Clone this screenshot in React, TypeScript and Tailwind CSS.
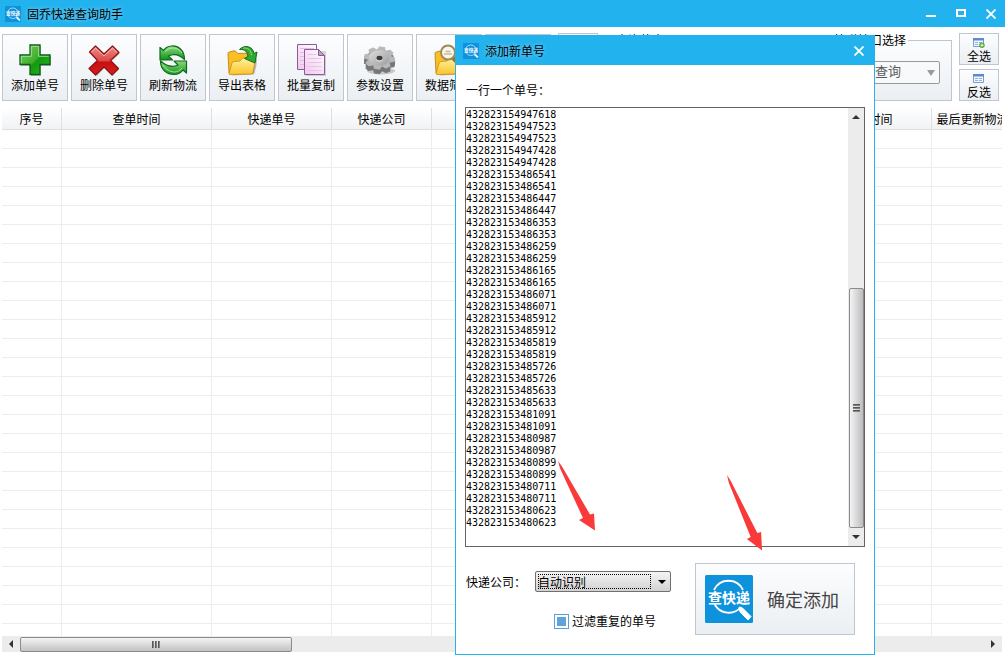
import type { ReactNode } from "react"
import clsx from "clsx"

const TRACKING_NUMBERS = [
  "432823154947618",
  "432823154947523",
  "432823154947523",
  "432823154947428",
  "432823154947428",
  "432823153486541",
  "432823153486541",
  "432823153486447",
  "432823153486447",
  "432823153486353",
  "432823153486353",
  "432823153486259",
  "432823153486259",
  "432823153486165",
  "432823153486165",
  "432823153486071",
  "432823153486071",
  "432823153485912",
  "432823153485912",
  "432823153485819",
  "432823153485819",
  "432823153485726",
  "432823153485726",
  "432823153485633",
  "432823153485633",
  "432823153481091",
  "432823153481091",
  "432823153480987",
  "432823153480987",
  "432823153480899",
  "432823153480899",
  "432823153480711",
  "432823153480711",
  "432823153480623",
  "432823153480623",
]

const COLUMNS = [
  { label: "序号", width: "w-[60px]" },
  { label: "查单时间", width: "w-[150px]" },
  { label: "快递单号", width: "w-[120px]" },
  { label: "快递公司", width: "w-[100px]" },
  { label: "物流状态", width: "w-[120px]" },
  { label: "最新物流", width: "w-[254px]" },
  { label: "发出时间", width: "w-[126px]" },
  { label: "最后更新物流时间", width: "w-[106px]" },
]

const ROW_COUNT = 40

const panel =
  "border border-[#c0c6d0] bg-linear-to-b from-[#fcfdfe] to-[#ebeff3]"

const Logo = ({ className }: { className: string }) => (
  <svg viewBox="0 0 48 48" className={className} aria-hidden="true">
    <rect width="48" height="48" rx="1.5" fill="#0f92dc" />
    <path
      d="M9 15a16 16 0 0 1 29 0M9.500 29a16 16 0 0 0 26.500 3"
      fill="none"
      stroke="#fff"
      strokeWidth="1.800"
    />
    <path
      d="M34 32l3.500 1 8.500 8.500-3 3.500-8-8z"
      fill="#fff"
      stroke="#fff"
      strokeLinejoin="round"
    />
    <text
      x="24"
      y="27.500"
      textAnchor="middle"
      fontSize="14"
      fontWeight="700"
      fill="#fff"
    >
      查快递
    </text>
  </svg>
)

const AddIcon = () => (
  <svg viewBox="0 0 32 32" className="size-8">
    <defs>
      <linearGradient id="add" x1="0" y1="0" x2="1" y2="1">
        <stop offset="0" stopColor="#7fd06a" />
        <stop offset=".5" stopColor="#3fae2c" />
        <stop offset=".55" stopColor="#129a10" />
        <stop offset="1" stopColor="#2fb61f" />
      </linearGradient>
    </defs>
    <path d="M12 2h10v10h10v10H22v10H12V22H2V12h10z" fill="#000" opacity=".25" />
    <path
      d="M11 1h10v10h10v9.500H21v10H11v-10H1V11h10z"
      fill="url(#add)"
      stroke="#0b5c14"
      strokeWidth="1.300"
    />
    <path
      d="M12.300 2.300h7.400v10h10M2.300 19.200V12.300h10v-10"
      fill="none"
      stroke="#a9e29b"
      strokeWidth=".9"
    />
  </svg>
)

const DeleteIcon = () => (
  <svg viewBox="0 0 32 32" className="size-8">
    <defs>
      <linearGradient id="del" x1="0" y1="0" x2="0" y2="1">
        <stop offset="0" stopColor="#ef8b87" />
        <stop offset=".5" stopColor="#dc4a49" />
        <stop offset=".56" stopColor="#c9100f" />
        <stop offset="1" stopColor="#d6201d" />
      </linearGradient>
    </defs>
    <path
      d="M8.500 3L17 11l8.500-8 6 7-8.500 7.500 8 8-6.500 6.500L17 23.500 9 32l-6.500-7 8-7.500L2.500 9z"
      fill="#000"
      opacity=".25"
    />
    <path
      d="M7.500 2L16 10l8.500-8L31 8.500l-8.500 8 8 8L24 31l-8-8-8.500 8L1 24.500l8.500-8L1.500 8z"
      fill="url(#del)"
      stroke="#8d1214"
      strokeWidth="1.200"
      strokeLinejoin="round"
    />
    <path
      d="M3.500 8l4-4L16 12l8.500-8 4.500 4.500"
      fill="none"
      stroke="#f9c3c0"
      strokeWidth=".9"
    />
  </svg>
)

const RefreshIcon = () => (
  <svg viewBox="0 0 32 32" className="size-8">
    <defs>
      <linearGradient id="ref" x1="0" y1="0" x2="0" y2="1">
        <stop offset="0" stopColor="#8fd882" />
        <stop offset=".5" stopColor="#4cb84a" />
        <stop offset="1" stopColor="#12901c" />
      </linearGradient>
    </defs>
    <g
      fill="url(#ref)"
      stroke="#0d6b1b"
      strokeWidth="1.200"
      strokeLinejoin="round"
    >
      <path d="M3 3.500v12.500h12.500l-4-4c5-2.500 11-1.500 16 3.500C27.500 6 21 1.500 14.500 2 11 2.200 8.500 3.500 6.500 6.500z" />
      <path d="M29.500 29V17H17l4 4c-5 2.500-11 1.500-17.500-4C3.500 26 10 30.500 17 30.500c4 0 7-1.500 9-4.500z" />
    </g>
    <path
      d="M8 7.800C13 2 21 3 25 9M6 21c4 7 14 10 19 3"
      fill="none"
      stroke="#b9ecb0"
      strokeWidth=".9"
    />
  </svg>
)

const FolderShape = () => (
  <>
    <path d="M6 31.500l22-1q3-8 3-15l-2-2-3 4z" fill="#000" opacity=".25" />
    <path
      d="M3 29L2 9.500Q2 8 3.500 8L7 7q2-.5 3 .5l2 2L26 9q2 0 2 2l-1 18z"
      fill="#fbbf26"
      stroke="#b8760c"
      strokeWidth=".8"
    />
    <path
      d="M3 29.500l3-10.500q.5-1.500 2-1.500l6-.5 3-3 11-.5q2 0 1.500 2L27 28.500q-.5 1.500-2 1.500L4 30.500q-1 0-1-1z"
      fill="url(#folder)"
      stroke="#c98a0e"
      strokeWidth=".8"
    />
  </>
)

const FolderGradient = () => (
  <defs>
    <linearGradient id="folder" x1="0" y1="0" x2="0" y2="1">
      <stop offset="0" stopColor="#fff3a0" />
      <stop offset="1" stopColor="#fcc42c" />
    </linearGradient>
  </defs>
)

const ExportIcon = () => (
  <svg viewBox="0 0 32 32" className="size-8">
    <FolderGradient />
    <FolderShape />
    <path
      d="M13.500 5.500C19 0 27 2.500 28 9.500l3-1.500-2 11-10.500-4.500 3.500-2C21.500 8 19 5 13.500 5.500z"
      fill="#2fa833"
      stroke="#14691c"
      strokeLinejoin="round"
    />
    <path d="M17 4.200c5-1 8 2 8.500 7" fill="none" stroke="#93dc85" />
  </svg>
)

const CopyIcon = () => (
  <svg viewBox="0 0 32 32" className="size-8">
    <defs>
      <linearGradient id="page" x1="1" y1="0" x2="0" y2="1">
        <stop offset="0" stopColor="#fff" />
        <stop offset="1" stopColor="#f0c8ee" />
      </linearGradient>
    </defs>
    <path d="M11 7h20v25H11z" fill="#000" opacity=".15" />
    <g stroke="#8d5a96">
      <path d="M2.500.500h19v25h-19z" fill="url(#page)" />
      <path
        d="M5 4.500h14M5 8.500h4M5 12.500h4M5 16.500h4M5 20.500h4"
        stroke="#e3b8e2"
      />
      <path d="M9.500 5.500h14l6 6v19h-20z" fill="url(#page)" />
      <path d="M23.500 5.500v6h6z" fill="#c79bd2" />
      <path
        d="M12.500 10.500h9M12.500 14.500h14M12.500 18.500h14M12.500 22.500h14M12.500 26.500h14"
        stroke="#e6c3e8"
      />
    </g>
  </svg>
)

const GEAR_TEETH = [0, 45, 90, 135, 180, 225, 270, 315]

const GearShape = () => (
  <>
    {GEAR_TEETH.map((angle) => (
      <path
        key={angle}
        d="M-2.500-15h5l2 6h-9z"
        strokeWidth="1"
        strokeLinejoin="round"
        transform={`rotate(${angle + 10})`}
      />
    ))}
    <circle r="10.500" stroke="none" />
  </>
)

const SettingsIcon = () => (
  <svg viewBox="0 0 32 32" className="size-8">
    <defs>
      <linearGradient id="gear" x1="0" y1="0" x2="1" y2="1">
        <stop offset="0" stopColor="#dedede" />
        <stop offset="1" stopColor="#9c9c9c" />
      </linearGradient>
    </defs>
    <ellipse cx="17" cy="27" rx="14" ry="3.500" fill="#000" opacity=".18" />
    <g fill="#777" stroke="#777">
      <g transform="translate(15.500 19.500) scale(1 .68)">
        <GearShape />
      </g>
      <g transform="translate(15.500 17) scale(1 .72)">
        <GearShape />
      </g>
    </g>
    <g
      fill="#b9b9b9"
      stroke="#b9b9b9"
      transform="translate(15.500 14) scale(1 .74)"
    >
      <GearShape />
    </g>
    <ellipse cx="15.500" cy="14" rx="10.500" ry="7.800" fill="url(#gear)" />
    <ellipse cx="15.500" cy="14" rx="3" ry="2.200" fill="#3c3c3c" />
    <path d="M12 15.500q3.500 3.500 7 0" fill="none" stroke="#e4e4e4" />
  </svg>
)

const FilterIcon = () => (
  <svg viewBox="0 0 32 32" className="size-8">
    <FolderGradient />
    <FolderShape />
    <path
      d="M20 14l9 9"
      stroke="#98702c"
      strokeWidth="4"
      strokeLinecap="round"
    />
    <circle
      cx="15"
      cy="8.500"
      r="7"
      fill="#f6f5ee"
      stroke="#a08a58"
      strokeWidth="2"
    />
    <path d="M11 10h8M12.500 7.500h5" stroke="#d0b98a" strokeWidth="1.500" />
  </svg>
)

const ListIcon = ({ plus }: { plus?: boolean }) => (
  <svg viewBox="0 0 12 10" className="h-[10px] w-3">
    <path d="M.5.500h10v8H.500z" fill="#f2f7ff" stroke="#7d9bcb" />
    <path d="M0 0h11v2.500H0z" fill="#5c8ad0" />
    <path d="M2 4.500h3M6 4.500h3M2 6.500h3M6 6.500h3" stroke="#8fb0e2" />
    {plus && (
      <>
        <circle cx="9" cy="7.200" r="2.700" fill="#55a83a" />
        <path d="M9 5.700v3M7.500 7.200h3" stroke="#fff" strokeWidth=".9" />
      </>
    )}
  </svg>
)

const CloseIcon = () => (
  <svg viewBox="0 0 10 10" className="size-[10px]">
    <path d="M.5.500l9 9M9.500.500l-9 9" stroke="#fff" strokeWidth="1.800" />
  </svg>
)

const Caret = ({ className, d }: { className: string; d: string }) => (
  <svg viewBox="0 0 8 8" className={clsx("size-2", className)} aria-hidden="true">
    <path d={d} fill="currentColor" />
  </svg>
)

const TOOLS = [
  { label: "添加单号", icon: <AddIcon /> },
  { label: "删除单号", icon: <DeleteIcon /> },
  { label: "刷新物流", icon: <RefreshIcon /> },
  { label: "导出表格", icon: <ExportIcon /> },
  { label: "批量复制", icon: <CopyIcon /> },
  { label: "参数设置", icon: <SettingsIcon /> },
  { label: "数据筛选", icon: <FilterIcon /> },
]

const ToolButton = ({ label, icon }: { label?: string; icon: ReactNode }) => (
  <button
    className={clsx(
      panel,
      "mt-px flex w-[66px] shrink-0 flex-col items-center pt-[9px] leading-[17px]"
    )}
  >
    {icon}
    {label}
  </button>
)

const SmallButton = ({ label, plus }: { label: string; plus?: boolean }) => (
  <button
    className={clsx(
      panel,
      "flex h-8 w-10 flex-col items-center justify-end leading-4"
    )}
  >
    <ListIcon plus={plus} />
    {label}
  </button>
)

const Toolbar = () => (
  <div className="flex h-[74px] shrink-0 gap-[3px] pl-[2px] pr-[6px] pt-[6px]">
    {TOOLS.map((tool) => (
      <ToolButton key={tool.label} {...tool} />
    ))}
    <ToolButton icon={<DeleteIcon />} />
    <div className="ml-1 flex flex-col gap-1">
      <SmallButton label="上移" />
      <SmallButton label="下移" />
    </div>
    <fieldset className={clsx(panel, "ml-1 min-w-0 flex-1 pl-[10px]")}>
      <legend className="leading-[14px]">查询状态</legend>
    </fieldset>
    <fieldset className={clsx(panel, "ml-1 w-[130px] px-[11px]")}>
      <legend className="pr-[2px] leading-[14px]">快递接口选择</legend>
      <div className="relative mt-[14px]">
        <select
          aria-label="快递接口选择"
          className="h-[23px] w-full appearance-none rounded-xs border border-[#9a9a9a] bg-[#f8f9fa] pb-[3px] pl-[14px] text-[13px] text-[#5a5a5a]"
        >
          <option>自动查询</option>
        </select>
        <Caret
          className="pointer-events-none absolute right-[5px] top-2 text-[#9a9a9a]"
          d="M0 1h8L4 7z"
        />
      </div>
    </fieldset>
    <div className="ml-1 flex flex-col gap-1">
      <SmallButton label="全选" plus />
      <SmallButton label="反选" />
    </div>
  </div>
)

const ParcelTable = () => (
  <div className="ml-[2px] mr-[3px] mt-[7px] flex min-h-0 flex-1 flex-col">
    <div className="min-h-0 flex-1 overflow-hidden">
      <table className="w-[1036px] table-fixed border-separate border-spacing-0">
        <thead>
          <tr>
            {COLUMNS.map((column) => (
              <th
                key={column.label}
                className={clsx(
                  column.width,
                  "h-[22px] whitespace-nowrap border-b border-r border-[#dcdfe3] bg-linear-to-b from-white to-[#f1f2f4] p-0 font-normal leading-4"
                )}
              >
                {column.label}
              </th>
            ))}
          </tr>
        </thead>
        <tbody>
          {Array.from(Array(ROW_COUNT)).map((_, i) => (
            <tr key={i}>
              {COLUMNS.map((column) => (
                <td
                  key={column.label}
                  className="h-[19px] border-b border-r border-[#ededed] p-0"
                />
              ))}
            </tr>
          ))}
        </tbody>
      </table>
    </div>
    <div className="mb-[3px] flex h-4 shrink-0 items-center bg-[#ececec]">
      <Caret className="mx-[5px] text-[#333]" d="M6 0v8L2 4z" />
      <div className="flex h-[15px] w-[272px] items-center justify-center rounded-xs border border-[#8b8b8b] bg-linear-to-b from-[#f4f4f4] to-[#c2c2c4]">
        <Grip className="flex-row" bar="h-[7px] w-[2px] bg-linear-to-r" />
      </div>
      <Caret className="ml-auto mr-[5px] text-[#333]" d="M2 0v8l4-4z" />
    </div>
  </div>
)

const Grip = ({ className, bar }: { className: string; bar: string }) => (
  <div className={clsx("flex gap-px", className)}>
    <span className={clsx(bar, "from-[#444] to-[#999]")} />
    <span className={clsx(bar, "from-[#444] to-[#999]")} />
    <span className={clsx(bar, "from-[#444] to-[#999]")} />
  </div>
)

const VerticalScrollbar = () => (
  <div className="flex w-4 shrink-0 flex-col items-center bg-[#ececec]">
    <Caret className="my-[5px] text-[#333]" d="M0 6h8L4 2z" />
    <div className="mt-auto flex h-[240px] w-[15px] items-center justify-center rounded-xs border border-[#8b8b8b] bg-linear-to-r from-[#f4f4f4] to-[#bdbdc0]">
      <Grip className="flex-col" bar="h-[2px] w-[7px] bg-linear-to-b" />
    </div>
    <Caret className="my-[5px] text-[#333]" d="M0 2h8L4 6z" />
  </div>
)

const AddDialog = () => (
  <section
    role="dialog"
    aria-labelledby="dialog-title"
    className="absolute left-[455px] top-[35px] w-[420px] border border-[#22b2ee] bg-white"
  >
    <header className="flex h-[29px] items-center bg-[#22b2ee] pl-[7px] pr-[10px]">
      <Logo className="size-4" />
      <h2 id="dialog-title" className="ml-[6px] [text-shadow:0_0_4px_#ffffff80]">
        添加新单号
      </h2>
      <button aria-label="关闭" className="ml-auto">
        <CloseIcon />
      </button>
    </header>
    <div className="px-[9px] pb-[19px] pt-4">
      <label htmlFor="numbers" className="block pl-px leading-[18px]">
        一行一个单号：
      </label>
      <div className="mt-2 flex h-[440px] border border-[#646464]">
        <textarea
          id="numbers"
          defaultValue={TRACKING_NUMBERS.join("\n")}
          spellCheck={false}
          className="min-w-0 flex-1 resize-none overflow-hidden pt-px font-['DejaVu_Sans_Mono',monospace] text-[10px] leading-3 outline-none"
        />
        <VerticalScrollbar />
      </div>
      <div className="mt-4 flex">
        <div className="flex-1 pt-2">
          <div className="flex items-center">
            <label htmlFor="company" className="w-[70px] pl-px">
              快递公司：
            </label>
            <div className="relative w-[136px]">
              <select
                id="company"
                className="block h-[21px] w-full appearance-none rounded-xs border border-[#707070] bg-linear-to-b from-[#f4f4f4] to-[#d2d2d2] pl-[2px]"
              >
                <option>自动识别</option>
              </select>
              <span className="pointer-events-none absolute inset-y-[3px] left-[3px] right-5 border border-dotted border-black" />
              <Caret
                className="pointer-events-none absolute right-[5px] top-[7px]"
                d="M0 2h8L4 6z"
              />
            </div>
          </div>
          <label className="ml-[89px] mt-5 flex items-center gap-[3px] leading-[18px]">
            <input
              type="checkbox"
              defaultChecked
              className="size-[15px] appearance-none border border-[#5a9fd8] bg-white checked:bg-[#5ea3dc] checked:shadow-[inset_0_0_0_2px_white]"
            />
            过滤重复的单号
          </label>
        </div>
        <button
          className={clsx(
            panel,
            "mr-[10px] flex h-[72px] w-[160px] items-center gap-[14px] pl-[9px] text-lg text-[#444]"
          )}
        >
          <Logo className="size-12" />
          确定添加
        </button>
      </div>
    </div>
  </section>
)

// red pointer, tail at the top left and tip at the bottom right
const Pointer = ({ className }: { className: string }) => (
  <svg
    viewBox="0 0 38 76"
    preserveAspectRatio="none"
    className={clsx("pointer-events-none absolute", className)}
    aria-hidden="true"
  >
    <path d="M0 0l4 6 28 52 4-1 1 18.500L21 64l4-2L2 8z" fill="#fa3a3a" />
  </svg>
)

const App = () => {
  return (
    <div className="relative flex h-screen flex-col overflow-hidden bg-white font-['Noto_Sans_CJK_SC',sans-serif] text-xs text-black">
      <header className="flex h-[27px] shrink-0 items-center bg-[#22b2ee] pl-[5px] pr-[9px]">
        <Logo className="size-4" />
        <h1 className="ml-[6px] [text-shadow:0_0_4px_#ffffff80]">
          固乔快递查询助手
        </h1>
        <div className="ml-auto flex gap-5">
          <button aria-label="最小化">
            <svg viewBox="0 0 10 10" className="size-[10px]">
              <path d="M0 7h10" stroke="#fff" strokeWidth="2" />
            </svg>
          </button>
          <button aria-label="最大化">
            <svg viewBox="0 0 10 10" className="size-[10px]">
              <path d="M1 1h8v6H1z" fill="none" stroke="#fff" strokeWidth="2" />
            </svg>
          </button>
          <button aria-label="关闭">
            <CloseIcon />
          </button>
        </div>
      </header>
      <Toolbar />
      <ParcelTable />
      <AddDialog />
      <Pointer className="left-[558px] top-[461px] h-[70px] w-[38px]" />
      <Pointer className="left-[727px] top-[475px] h-[76px] w-9" />
    </div>
  )
}

export default App
